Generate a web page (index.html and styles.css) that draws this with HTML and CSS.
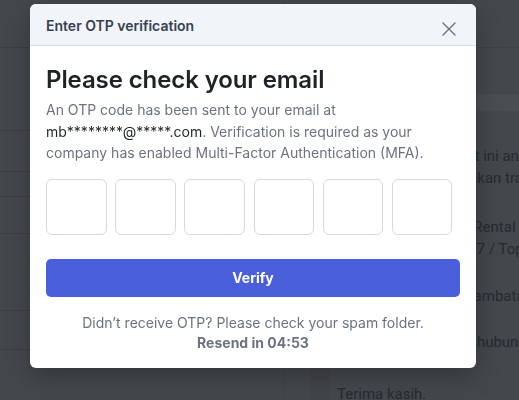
FILE: index.html
```html
<!DOCTYPE html>
<html lang="en">
<head>
  <meta charset="UTF-8" />
  <meta name="viewport" content="width=device-width, initial-scale=1.0" />
  <title>Enter OTP verification</title>
  <link rel="stylesheet" href="styles.css">
</head>
<body>
  <div class="page">
    <div class="page-side">
      <div class="row r1"></div>
      <div class="row r2"></div>
      <div class="row r3"></div>
      <div class="row r4"></div>
      <div class="row r5"></div>
      <div class="row r6"></div>
      <div class="row r7"></div>
    </div>
    <div class="page-main">
      <div class="main-head"></div>
      <div class="main-band"></div>
      <div class="mail">
        <p class="l1">Ada tagihan anda saat ini anda</p>
        <p class="l2">Harap anda segera jalankan transaksi</p>
        <p class="l3">Nama Layanan: Mobil Rental</p>
        <p class="l4">Nomor: INV-2024/0417 / Top Up</p>
        <p class="l5">Mohon maaf atas keterlambatan</p>
        <p class="l6">Silakan langsung menghubungi kami</p>
        <p class="l7">Terima kasih.</p>
      </div>
    </div>
  </div>

  <div class="overlay">
    <div class="modal">
      <div class="modal-header">
        <span class="modal-title">Enter OTP verification</span>
        <button class="close" aria-label="Close">
          <svg width="14" height="14" viewBox="0 0 14 14">
            <path d="M1 1L13 13M13 1L1 13" stroke="#6b7280" stroke-width="1.4" stroke-linecap="round" fill="none"/>
          </svg>
        </button>
      </div>
      <div class="modal-body">
        <h1>Please check your email</h1>
        <p class="info">An OTP code has been sent to your email at <span class="email">mb********@*****.com</span>. Verification is required as your company has enabled Multi-Factor Authentication (MFA).</p>
        <div class="otp">
          <input type="text" maxlength="1">
          <input type="text" maxlength="1">
          <input type="text" maxlength="1">
          <input type="text" maxlength="1">
          <input type="text" maxlength="1">
          <input type="text" maxlength="1">
        </div>
        <button class="verify">Verify</button>
        <div class="resend">
          <div>Didn’t receive OTP? Please check your spam folder.</div>
          <div class="timer">Resend in 04:53</div>
        </div>
      </div>
    </div>
  </div>
</body>
</html>
```

FILE: styles.css
```css
* {
  box-sizing: border-box;
}
body {
  margin: 0;
  height: 400px;
  overflow: hidden;
  background: #44474c;
  font-family: Inter, "Noto Sans", sans-serif;
}
.page {
  display: flex;
  height: 400px;
}
.page-side {
  width: 285px;
  flex-shrink: 0;
  display: flex;
  flex-direction: column;
  border-right: 1px solid #3f4247;
}
.row {
  border-bottom: 1px solid #3b3e43;
}
.r1 { height: 48px; }
.r2 { height: 83px; }
.r3 { height: 41px; }
.r4 { height: 25px; }
.r5 { height: 37px; }
.r6 { height: 77px; }
.r7 { height: 39px; }
.page-main {
  flex: 1;
  min-width: 0;
  overflow: hidden;
  display: flex;
  flex-direction: column;
}
.main-head {
  height: 48px;
  flex-shrink: 0;
  border-bottom: 1px solid #3d4045;
}
.main-band {
  height: 17px;
  flex-shrink: 0;
  margin-top: 46px;
  background: #4a4d52;
}
.mail {
  flex: 1;
  padding-left: 7px;
  margin-left: 25px;
  border-left: 20px solid #414449;
  font-family: Roboto, sans-serif;
  font-size: 15px;
  color: #272a2f;
  white-space: nowrap;
}
.mail p {
  margin: 0;
  line-height: 22px;
}
.l1 { margin-top: 34px !important; text-indent: -7px; }
.l2 { text-indent: -21px; }
.l3 { margin-top: 27px !important; text-indent: -12px; }
.l4 { text-indent: -7px; }
.l5 { margin-top: 25px !important; text-indent: -22px; }
.l6 { margin-top: 24px !important; text-indent: -15px; }
.l7 { margin-top: 30px !important; }

.overlay {
  position: fixed;
  inset: 0;
}
.modal {
  position: absolute;
  left: 30px;
  top: 4px;
  width: 446px;
  background: #ffffff;
  border-radius: 6px;
  overflow: hidden;
  box-shadow: 0 8px 24px rgba(0, 0, 0, 0.25);
}
.modal-header {
  height: 42px;
  display: flex;
  align-items: center;
  justify-content: space-between;
  padding: 0 20px 0 16px;
  background: #f1f4f9;
  border-bottom: 1px solid #d7dbe2;
}
.modal-title {
  font-size: 14px;
  font-weight: 600;
  color: #374151;
  padding-top: 1px;
}
.close {
  border: none;
  background: none;
  padding: 0;
  width: 14px;
  height: 14px;
  margin-top: 9px;
  cursor: pointer;
}
.modal-body {
  padding: 18px 16px 15px;
}
h1 {
  margin: 0;
  font-size: 24px;
  line-height: 32px;
  font-weight: 600;
  color: #1f2328;
  letter-spacing: -0.1px;
}
.info {
  margin: 3px 0 0;
  font-size: 14px;
  line-height: 21.5px;
  color: #6b7280;
}
.email {
  color: #1f2328;
}
.otp {
  display: flex;
  gap: 8.7px;
  margin-top: 15px;
}
.otp input {
  width: 60.5px;
  height: 56px;
  border: 1px solid #d5d9e0;
  border-radius: 6px;
  background: #fff;
  font-size: 20px;
  text-align: center;
}
.verify {
  display: block;
  width: 100%;
  height: 38px;
  margin-top: 24px;
  border: none;
  border-radius: 5px;
  background: #4a5fdc;
  color: #ffffff;
  font-family: inherit;
  font-size: 14px;
  font-weight: 700;
  cursor: pointer;
}
.resend {
  margin-top: 16px;
  text-align: center;
  font-size: 14px;
  line-height: 20px;
  color: #6b7280;
}
.timer {
  font-weight: 700;
}
```
